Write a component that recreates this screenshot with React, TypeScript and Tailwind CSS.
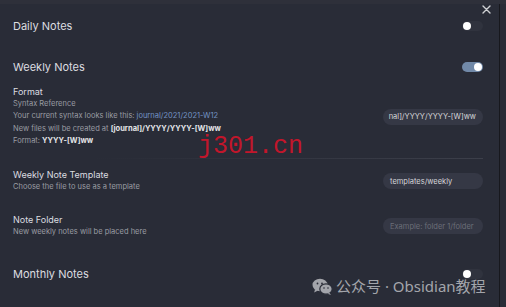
import React from 'react'

function Toggle({ on }: { on?: boolean }) {
  return (
    <div
      className={`relative w-[21px] h-[10px] rounded-full ${on ? 'bg-[#7189a8]' : 'bg-[#30333e]'}`}
    >
      <div
        className={`absolute top-[1px] w-[8px] h-[8px] rounded-full bg-white ${on ? 'right-[1px]' : 'left-[1px]'}`}
      />
    </div>
  )
}

function Field({ value, placeholder }: { value?: string; placeholder?: string }) {
  return (
    <div className="w-[100px] h-[16px] rounded-full bg-[#353845] flex items-center px-[7px] overflow-hidden">
      {value ? (
        <span className="text-[7.5px] text-[#d6d7da] whitespace-nowrap">{value}</span>
      ) : (
        <span className="text-[7.5px] text-[#6b6e78] whitespace-nowrap">{placeholder}</span>
      )}
    </div>
  )
}

function WeChat() {
  return (
    <svg width="21" height="17" viewBox="0 0 21 17" fill="#a3a5ab">
      <ellipse cx="8" cy="7" rx="7.5" ry="6.2" />
      <path d="M3 11.5 L2.2 14.5 L6 12.5 Z" />
      <ellipse cx="14" cy="11" rx="6.2" ry="5.2" fill="#a3a5ab" stroke="#292c37" strokeWidth="1.2" />
      <path d="M17.5 15 L19 17 L15.5 15.8 Z" />
      <circle cx="5.5" cy="5.5" r="0.9" fill="#292c37" />
      <circle cx="10" cy="5.5" r="0.9" fill="#292c37" />
      <circle cx="12" cy="10" r="0.8" fill="#292c37" />
      <circle cx="16" cy="10" r="0.8" fill="#292c37" />
    </svg>
  )
}

export default function App() {
  return (
    <div
      className="relative w-[506px] h-[307px] overflow-hidden bg-[#292c37] flex flex-col"
      style={{ fontFamily: 'Inter, "Noto Sans", sans-serif' }}
    >
      <div className="h-[4px] bg-[#2e303a] shrink-0" />
      <div className="flex flex-1">
        <div className="w-[500px] border-r border-[#17181d] pl-[13px] pr-[16px] flex flex-col">
          {/* Daily */}
          <div className="h-[44px] flex items-center justify-between">
            <span className="text-[11px] text-[#dcdde0]">Daily Notes</span>
            <Toggle />
          </div>

          {/* Weekly */}
          <div className="h-[38px] flex items-center justify-between">
            <span className="text-[11px] text-[#dcdde0]">Weekly Notes</span>
            <Toggle on />
          </div>

          {/* Format */}
          <div className="flex items-center justify-between">
            <div className="flex flex-col">
              <span className="text-[9px] leading-[12px] text-[#dcdde0]">Format</span>
              <div className="text-[7.5px] leading-[12.3px] text-[#9a9ca3]">
                <div>Syntax Reference</div>
                <div>
                  Your current syntax looks like this:{' '}
                  <span className="text-[#7393c4]">journal/2021/2021-W12</span>
                </div>
                <div>
                  New files will be created at{' '}
                  <span className="font-bold text-[#e4e5e8]">[journal]/YYYY/YYYY-[W]ww</span>
                </div>
                <div>
                  Format: <span className="font-bold text-[#e4e5e8]">YYYY-[W]ww</span>
                </div>
              </div>
            </div>
            <div className="w-[100px] h-[16px] rounded-full bg-[#353845] flex items-center justify-end px-[7px] overflow-hidden">
              <span className="text-[7.5px] text-[#d6d7da] whitespace-nowrap">nal]/YYYY/YYYY-[W]ww</span>
            </div>
          </div>

          <div className="mt-[11px] ml-[82px] h-px bg-gradient-to-r from-transparent to-[#3c3f4a]" />

          {/* Template */}
          <div className="mt-[10px] flex items-center justify-between">
            <div className="flex flex-col">
              <span className="text-[9px] leading-[12px] text-[#dcdde0]">Weekly Note Template</span>
              <span className="text-[7.5px] leading-[12px] text-[#9a9ca3]">
                Choose the file to use as a template
              </span>
            </div>
            <Field value="templates/weekly" />
          </div>

          {/* Folder */}
          <div className="mt-[21px] flex items-center justify-between">
            <div className="flex flex-col">
              <span className="text-[9px] leading-[12px] text-[#dcdde0]">Note Folder</span>
              <span className="text-[7.5px] leading-[12px] text-[#9a9ca3]">
                New weekly notes will be placed here
              </span>
            </div>
            <Field placeholder="Example: folder 1/folder" />
          </div>

          {/* Monthly */}
          <div className="mt-[18px] h-[36px] flex items-center justify-between">
            <span className="text-[11px] text-[#dcdde0]">Monthly Notes</span>
            <Toggle />
          </div>
        </div>
      </div>

      {/* close */}
      <div className="absolute left-[481px] top-[4px] w-[10px] h-[10px] flex items-center justify-center">
        <svg width="9" height="9" viewBox="0 0 9 9" stroke="#cfd0d3" strokeWidth="1.4" strokeLinecap="round">
          <path d="M1 1 L8 8 M8 1 L1 8" />
        </svg>
      </div>

      {/* watermarks */}
      <div
        className="absolute left-[198px] top-[133px] text-[25px] leading-[28px] text-[#d3142a] opacity-90"
        style={{ fontFamily: '"Liberation Mono", monospace' }}
      >
        j301.cn
      </div>
      <div className="absolute left-[312px] top-[276px] flex items-center gap-[3px] text-[#a3a5ab]">
        <WeChat />
        <span
          className="text-[15px] leading-[20px]"
          style={{ fontFamily: '"Noto Sans", "Noto Sans CJK SC", sans-serif' }}
        >
          公众号 · Obsidian教程
        </span>
      </div>
    </div>
  )
}
